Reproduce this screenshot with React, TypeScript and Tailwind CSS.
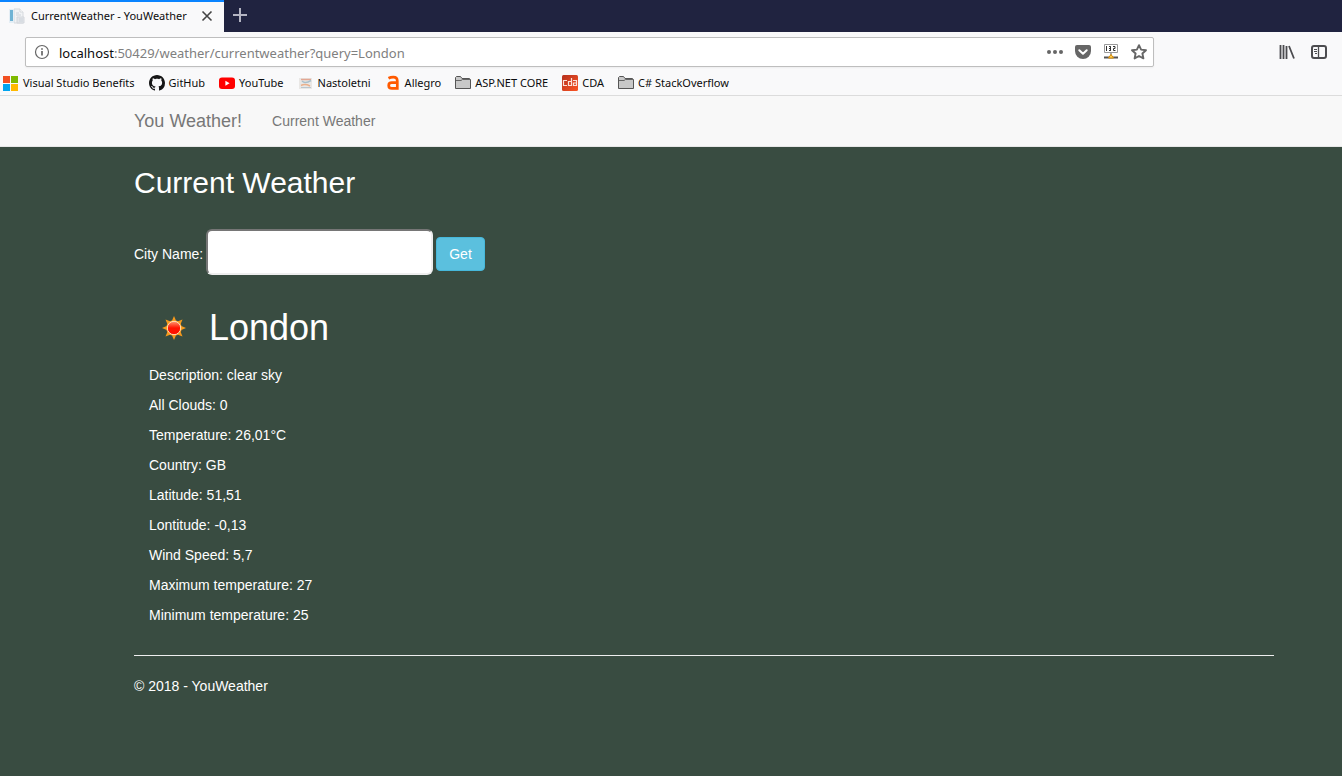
import type { ReactNode } from "react";

function PageIcon() {
  return (
    <svg width="16" height="16" viewBox="0 0 16 16" aria-hidden="true">
      <path d="M5 1h6l3 3v11H5z" fill="#f1f3f5" stroke="#d5d9dd" />
      <path d="M11 1v3h3" fill="#fff" stroke="#d5d9dd" />
      <path d="M8 9h7v6H8z" fill="#e3e6ea" stroke="#d3d7dc" />
      <path d="M7 5h3M7 7h5M10 11h4M10 13h4" stroke="#ccd3da" />
      <path d="M0 1h5v14H0z" fill="#e4eef5" />
      <path d="M1 2h3v11H1z" fill="#6fb3d4" />
    </svg>
  );
}

function WindowsIcon() {
  return (
    <svg width="16" height="16" viewBox="0 0 16 16" aria-hidden="true">
      <path d="M0 1h7v7H0z" fill="#f25022" />
      <path d="M8 1h7v7H8z" fill="#7fba00" />
      <path d="M0 9h7v7H0z" fill="#00a4ef" />
      <path d="M8 9h7v7H8z" fill="#ffb900" />
    </svg>
  );
}

function GitHubIcon() {
  return (
    <svg width="16" height="16" viewBox="0 0 16 16" aria-hidden="true">
      <path
        fill="#161616"
        d="M8 0C3.58 0 0 3.58 0 8c0 3.54 2.29 6.53 5.47 7.59.4.07.55-.17.55-.38 0-.19-.01-.82-.01-1.49-2.01.37-2.53-.49-2.69-.94-.09-.23-.48-.94-.82-1.13-.28-.15-.68-.52-.01-.53.63-.01 1.08.58 1.23.82.72 1.21 1.87.87 2.33.66.07-.52.28-.87.51-1.07-1.78-.2-3.64-.89-3.64-3.95 0-.87.31-1.59.82-2.15-.08-.2-.36-1.02.08-2.12 0 0 .67-.21 2.2.82.64-.18 1.32-.27 2-.27s1.36.09 2 .27c1.53-1.04 2.2-.82 2.2-.82.44 1.1.16 1.92.08 2.12.51.56.82 1.27.82 2.15 0 3.07-1.87 3.75-3.65 3.95.29.25.54.73.54 1.48 0 1.07-.01 1.93-.01 2.2 0 .21.15.46.55.38A8.01 8.01 0 0 0 16 8c0-4.42-3.58-8-8-8z"
      />
    </svg>
  );
}

function YouTubeIcon() {
  return (
    <svg width="16" height="16" viewBox="0 0 16 16" aria-hidden="true">
      <rect x="0" y="2.5" width="16" height="11.5" rx="3" fill="#f00" />
      <path d="M6.4 5.8v4.9l4.2-2.45z" fill="#fff" />
    </svg>
  );
}

function NastoletniIcon() {
  return (
    <svg width="16" height="16" viewBox="0 0 16 16" aria-hidden="true">
      <path d="M1 3h13v11H1z" fill="#e9e7e5" />
      <path d="M3 4.500h10" stroke="#e3a793" strokeWidth="1.500" />
      <path d="M4 6c2 2 5 2 9-.5" stroke="#a9bfcb" strokeWidth="1.500" fill="none" />
      <path d="M3 10.500c3-1.500 6-1 9 .5" stroke="#eab08c" strokeWidth="1.500" fill="none" />
      <path d="M3 12.500h10" stroke="#b9c6ce" />
    </svg>
  );
}

function AllegroIcon() {
  return (
    <svg width="16" height="16" viewBox="0 0 16 16" aria-hidden="true">
      <path
        d="M3.500 3.300C5 2.500 6.700 2.200 8.300 2.200c3 0 4 1.300 4 3.800v8.700M12 7.700H6.900c-2 0-3.200.9-3.200 2.700 0 1.800 1.200 3 3.200 3H12"
        fill="none"
        stroke="#ff5a00"
        strokeWidth="2.700"
      />
    </svg>
  );
}

function FolderIcon() {
  return (
    <svg width="16" height="16" viewBox="0 0 16 16" aria-hidden="true">
      <path d="M.5 13.500v-11l1-1h4l1.500 2h7.500l1 1v9z" fill="#c8c8c8" stroke="#555" />
      <path d="M1 5.500h5l1.500-1H15" fill="none" stroke="#666" />
    </svg>
  );
}

function CdaIcon() {
  return (
    <svg width="16" height="16" viewBox="0 0 16 16" aria-hidden="true">
      <defs>
        <linearGradient id="cda" x1="0" y1="0" x2="1" y2="1">
          <stop offset="0" stopColor="#b5301d" />
          <stop offset="1" stopColor="#fb5524" />
        </linearGradient>
      </defs>
      <rect width="16" height="16" rx="1.500" fill="url(#cda)" />
      <path
        d="M5 5.500H1.500v5H5M9.500 3v7.500h-3v-4h3M11 5.500h3.500v5H11.500v-2.500h3"
        fill="none"
        stroke="#fbe3da"
        strokeWidth="1.200"
      />
    </svg>
  );
}

function SunIcon() {
  const rays = [0, 45, 90, 135, 180, 225, 270, 315];
  return (
    <svg width="50" height="50" viewBox="0 0 50 50" role="img" aria-label="clear sky">
      <defs>
        <linearGradient id="sun" x1="0" y1="0" x2="0" y2="1">
          <stop offset="0" stopColor="#ff9a70" />
          <stop offset="0.5" stopColor="#ff1500" />
          <stop offset="1" stopColor="#ff1000" />
        </linearGradient>
      </defs>
      {rays.map((angle) => (
        <path key={angle} d="M25 13l3 7h-6z" fill="#f79a1c" transform={`rotate(${angle} 25 25)`} />
      ))}
      <circle cx="25" cy="25" r="7.800" fill="#f79a1c" />
      <circle cx="25" cy="25" r="6.700" fill="url(#sun)" stroke="#ffe3b8" strokeWidth="1" />
    </svg>
  );
}

const bookmarks: { label: string; icon: ReactNode }[] = [
  { label: "Visual Studio Benefits", icon: <WindowsIcon /> },
  { label: "GitHub", icon: <GitHubIcon /> },
  { label: "YouTube", icon: <YouTubeIcon /> },
  { label: "Nastoletni", icon: <NastoletniIcon /> },
  { label: "Allegro", icon: <AllegroIcon /> },
  { label: "ASP.NET CORE", icon: <FolderIcon /> },
  { label: "CDA", icon: <CdaIcon /> },
  { label: "C# StackOverflow", icon: <FolderIcon /> },
];

const details = [
  "Description: clear sky",
  "All Clouds: 0",
  "Temperature: 26,01°C",
  "Country: GB",
  "Latitude: 51,51",
  "Lontitude: -0,13",
  "Wind Speed: 5,7",
  "Maximum temperature: 27",
  "Minimum temperature: 25",
];

function TabBar() {
  return (
    <div className="flex h-8 bg-[#202340]">
      <div className="flex w-56 items-center border-t-2 border-[#0a84ff] bg-[#f9f9fa] pb-0.5 pl-[9px] pr-[9px]">
        <PageIcon />
        <span className="ml-1.5 flex-1 whitespace-nowrap text-[11px]">CurrentWeather - YouWeather</span>
        <button type="button" aria-label="Close tab" className="flex size-4 items-center justify-center">
          <svg width="12" height="12" viewBox="0 0 12 12">
            <path d="M1.500 1.500l9 9M10.500 1.500l-9 9" stroke="#444" strokeWidth="1.600" />
          </svg>
        </button>
      </div>
      <button type="button" aria-label="New tab" className="flex w-8 items-center justify-center pb-0.5">
        <svg width="14" height="14" viewBox="0 0 14 14">
          <path d="M7 0v14M0 7h14" stroke="#b4b5c2" strokeWidth="2" />
        </svg>
      </button>
    </div>
  );
}

function Toolbar() {
  return (
    <div className="flex h-10 items-center bg-[#f9f9fa] pl-[25px] pr-[15px]">
      <div className="flex h-[30px] flex-1 items-center rounded-xs border border-[#bebebe] bg-white pl-2 shadow-xs">
        <svg width="16" height="16" viewBox="0 0 16 16" aria-hidden="true">
          <circle cx="8" cy="8" r="6.500" fill="none" stroke="#666" strokeWidth="1.200" />
          <path d="M8 7v4.500M8 4.200v1.600" stroke="#666" strokeWidth="1.700" />
        </svg>
        <a href="#address" className="ml-[9px] flex-1 pt-0.5 text-[13px] text-[#808080]">
          <span className="text-[#0c0c0d]">localhost</span>:50429/weather/currentweather?query=London
        </a>
        <div className="flex items-center gap-3 pr-1.5">
          <button type="button" aria-label="Page actions">
            <svg className="block" width="16" height="16" viewBox="0 0 16 16" fill="#666">
              <circle cx="2" cy="8" r="2" />
              <circle cx="8" cy="8" r="2" />
              <circle cx="14" cy="8" r="2" />
            </svg>
          </button>
          <button type="button" aria-label="Save to Pocket">
            <svg className="block" width="16" height="16" viewBox="0 0 16 16">
              <path d="M2 1h12a2 2 0 0 1 2 2v4a8 8 0 0 1-16 0V3a2 2 0 0 1 2-2z" fill="#666" />
              <path d="M4.300 6.200L8 9.700l3.700-3.500" fill="none" stroke="#fff" strokeWidth="2" strokeLinecap="round" strokeLinejoin="round" />
            </svg>
          </button>
          <button type="button" aria-label="Server address">
            <svg className="block" width="16" height="16" viewBox="0 0 16 16">
              <path d="M1.500.5h13v8h-13z" fill="#fff" stroke="#999" />
              <path d="M3.500 2v5M6 2.500h1.500v4H6M6 4.500h1.500v2M7.500 2.500v4M10 2.500h2v2h-1.500v2h2" fill="none" stroke="#333" />
              <path d="M8 9v3" stroke="#555" />
              <path d="M1 13.500h14" stroke="#555" strokeWidth="2" />
              <path d="M8 10.500l2.500 3.500h-5z" fill="#ffd35a" stroke="#d98a00" />
            </svg>
          </button>
          <button type="button" aria-label="Bookmark this page">
            <svg className="block" width="16" height="16" viewBox="0 0 16 16">
              <path
                d="M8 1.200l2.100 4.400 4.900.6-3.600 3.300 1 4.900L8 12l-4.400 2.400 1-4.900L1 6.200l4.900-.6z"
                fill="none"
                stroke="#666"
                strokeWidth="1.900"
                strokeLinejoin="round"
              />
            </svg>
          </button>
        </div>
      </div>
      <div className="ml-[125px] flex gap-4">
        <button type="button" aria-label="Library">
          <svg className="block" width="16" height="16" viewBox="0 0 16 16">
            <path d="M1.500 1v14M4.500 1v14M7.500 2v13M10 2l5 12.500" stroke="#4c4c4f" strokeWidth="1.800" />
          </svg>
        </button>
        <button type="button" aria-label="Sidebars">
          <svg className="block" width="16" height="16" viewBox="0 0 16 16" fill="none" stroke="#4c4c4f">
            <rect x="1" y="2" width="14" height="12" rx="2" strokeWidth="2" />
            <path d="M7.500 2v12" strokeWidth="1.300" />
            <path d="M3 5.500h3M3 7.500h3M4 9.500h2" />
          </svg>
        </button>
      </div>
    </div>
  );
}

export default function App() {
  return (
    <div className="min-h-screen bg-[#394c41] font-['Liberation_Sans',Arial,sans-serif] text-sm leading-5 text-white">
      <header className="font-['Noto_Sans',sans-serif] text-[#0c0c0d]">
        <TabBar />
        <Toolbar />
        <nav aria-label="Bookmarks" className="flex h-6 items-center gap-3.5 border-b border-[#dcdcdc] bg-[#f9f9fa] pb-0.5 pl-[3px]">
          {bookmarks.map((b) => (
            <a key={b.label} href="#bookmark" className="flex items-center gap-1 whitespace-nowrap text-[11px]">
              {b.icon}
              {b.label}
            </a>
          ))}
        </nav>
      </header>

      <nav aria-label="Main" className="flex h-[51px] items-center gap-[30px] border-b border-[#e7e7e7] bg-[#f8f8f8] pl-[134px] text-[#777]">
        <a href="#home" className="text-lg leading-5">You Weather!</a>
        <a href="#current">Current Weather</a>
      </nav>

      <main className="pl-[134px] pr-[68px] pt-[19px]">
        <h2 className="text-3xl leading-[33px]">Current Weather</h2>
        <form className="mt-[30px] flex items-center gap-[3px]" onSubmit={(e) => e.preventDefault()}>
          <label htmlFor="city" className="mt-1">City Name:</label>
          <input
            id="city"
            type="text"
            className="h-[46px] w-[227px] rounded-md border-2 border-[#eee] border-l-[#767676] border-t-[#767676] bg-white px-2 text-black"
          />
          <button type="submit" className="mt-1 h-[34px] rounded border border-[#46b8da] bg-[#5bc0de] px-3">
            Get
          </button>
        </form>

        <section className="mt-7 pl-[15px]">
          <div className="flex h-[50px] items-center gap-2.5">
            <SunIcon />
            <h1 className="text-4xl leading-10">London</h1>
          </div>
          <div className="mt-3 flex flex-col gap-2.5">
            {details.map((line) => (
              <p key={line}>{line}</p>
            ))}
          </div>
        </section>

        <hr className="mt-[30px] border-[#eee]" />
        <footer className="py-5">© 2018 - YouWeather</footer>
      </main>
    </div>
  );
}
